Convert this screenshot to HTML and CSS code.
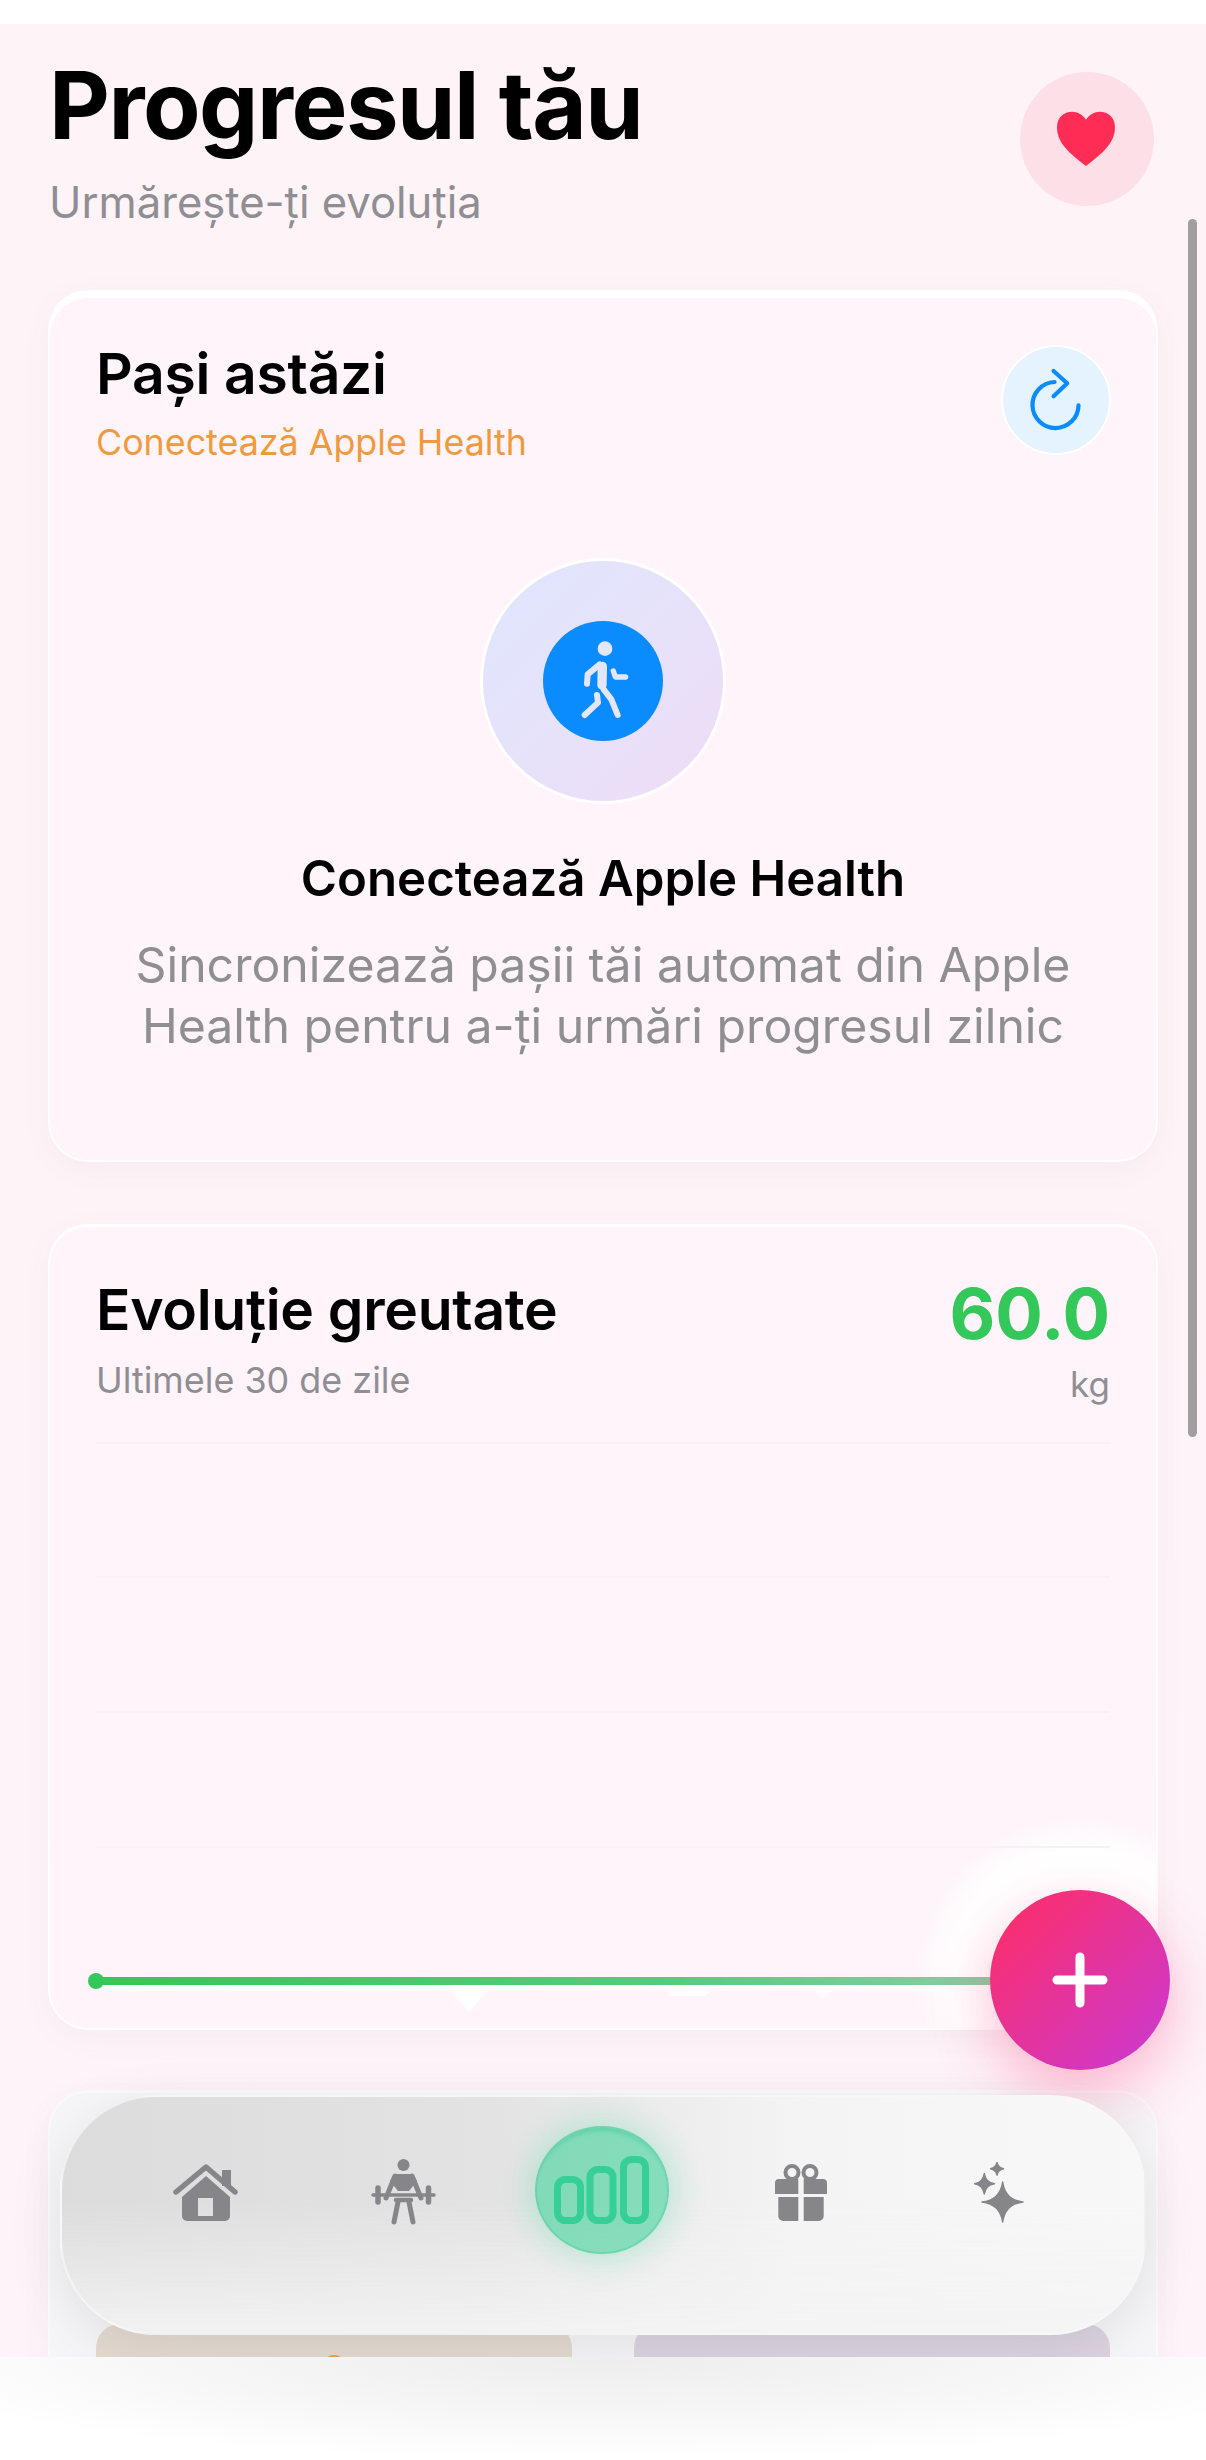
FILE: index.html
```html
<!DOCTYPE html>
<html lang="ro">
<head>
<meta charset="utf-8">
<title>Progresul tău</title>
<link rel="stylesheet" href="styles.css">
</head>
<body>
<main class="screen">
  <header class="page-head">
    <div>
      <h1 class="page-title">Progresul tău</h1>
      <p class="page-sub">Urmărește-ți evoluția</p>
    </div>
    <button class="heart-btn" aria-label="Favorite">
      <svg class="icon-fill" viewBox="0 0 400 402"><path fill="#ff2d55" d="M197 282C150 245 110 215 110 165C110 135 132 119 155 119C172 119 188 128 197 143C206 128 222 119 239 119C262 119 284 135 284 165C284 215 244 245 197 282Z"/></svg>
    </button>
  </header>

  <section class="card card-steps">
    <div class="card-head">
      <div>
        <h2 class="card-title">Pași astăzi</h2>
        <p class="steps-hint">Conectează Apple Health</p>
      </div>
      <button class="refresh-btn" aria-label="Reîmprospătează">
        <svg class="icon-fill" viewBox="0 0 325 327" fill="none" stroke="#0a8cff" stroke-width="13" stroke-linecap="round" stroke-linejoin="round"><path d="M232 180A71 71 0 1 1 158 108"/><path d="M155 74L197 112L155 152"/></svg>
      </button>
    </div>
    <div class="walk-ring">
      <div class="walk-dot">
        <svg class="icon-fill" viewBox="0 0 360 360" fill="none" stroke="#e6e6fb" stroke-linecap="round" stroke-linejoin="round">
          <circle cx="186" cy="83" r="22" fill="#e6e6fb" stroke="none"/>
          <path d="M178 136L177 192" stroke-width="28"/>
          <path d="M170 130L134 160L132 188" stroke-width="18"/>
          <path d="M211 150L217 168L248 168" stroke-width="16"/>
          <path d="M182 205L205 235L224 282" stroke-width="18"/>
          <path d="M162 222L165 245L125 282" stroke-width="18"/>
        </svg>
      </div>
    </div>
    <h3 class="connect-title">Conectează Apple Health</h3>
    <p class="connect-text">Sincronizează pașii tăi automat din Apple Health pentru a-ți urmări progresul zilnic</p>
  </section>

  <section class="card card-weight">
    <div class="weight-head">
      <div>
        <h2 class="card-title">Evoluție greutate</h2>
        <p class="weight-range">Ultimele 30 de zile</p>
      </div>
      <div class="weight-value">
        <strong class="weight-num">60.0</strong>
        <span class="weight-unit">kg</span>
      </div>
    </div>
    <svg class="chart" viewBox="0 0 1014 575">
      <defs>
        <linearGradient id="lineGrad" gradientUnits="userSpaceOnUse" x1="0" y1="0" x2="900" y2="0">
          <stop offset="0" stop-color="#34c759"/>
          <stop offset=".65" stop-color="#5cc981"/>
          <stop offset="1" stop-color="#8fcaa2"/>
        </linearGradient>
      </defs>
      <g stroke="#f6f1f4" stroke-width="2">
        <line x1="0" y1="1" x2="1014" y2="1"/>
        <line x1="0" y1="135" x2="1014" y2="135"/>
        <line x1="0" y1="270" x2="1014" y2="270"/>
        <line x1="0" y1="405" x2="1014" y2="405"/>
      </g>
      <g fill="#fff">
        <path d="M350 543H396L373 570Z"/>
        <path d="M565 543H619L610 554H575Z"/>
        <path d="M712 543H742L727 556Z"/>
        <path d="M0 543H900V549H0Z" opacity=".7"/>
      </g>
      <line x1="0" y1="539" x2="900" y2="539" stroke="url(#lineGrad)" stroke-width="8"/>
      <circle cx="0" cy="539" r="8" fill="#34c759"/>
    </svg>
  </section>

  <section class="card card-tiles">
    <div class="tile tile-orange"><span class="tile-dot"></span></div>
    <div class="tile tile-purple"></div>
  </section>

  <span class="scroll-thumb"></span>

  <button class="fab" aria-label="Adaugă">
    <svg class="fab-plus" viewBox="0 0 56 56" stroke="#fff" stroke-width="9" stroke-linecap="round"><path d="M28 5V51M5 28H51"/></svg>
  </button>

  <nav class="tabbar">
    <a class="tab">
      <svg class="ico-home" viewBox="0 0 65 57" fill="#86868a" fill-rule="evenodd"><path d="M49 6H58V22H49Z"/><path d="M33 12L57 33V52A5 5 0 0 1 52 57H14A5 5 0 0 1 9 52V33ZM25 34V52H40V34Z"/><path d="M3 28L33 3L62 28" fill="none" stroke="#86868a" stroke-width="5.5" stroke-linecap="round" stroke-linejoin="round"/></svg>
    </a>
    <a class="tab">
      <svg class="ico-lift" viewBox="0 0 65 66" fill="#86868a">
        <circle cx="32.5" cy="6" r="6"/>
        <path d="M23 15H42L46 22L38 32H27L19 22Z"/>
        <g fill="none" stroke="#86868a" stroke-linecap="round">
          <path d="M24 17L15 39M41 17L50 39" stroke-width="5"/>
          <path d="M2 36H63" stroke-width="3.5"/>
          <path d="M7 29V43M57.500 29V43" stroke-width="5.500"/>
          <path d="M27 43L23 63M38 43L42 63" stroke-width="5"/>
          <path d="M25 41H40" stroke-width="4.500"/>
        </g>
      </svg>
    </a>
    <a class="tab tab-active">
      <span class="active-disc">
        <svg class="ico-bars" viewBox="0 0 96 68" fill="none" stroke="#35cf97" stroke-width="7"><rect x="3.500" y="23.500" width="23" height="41" rx="8"/><rect x="36" y="13.500" width="23" height="51" rx="8"/><rect x="69.500" y="3.500" width="22" height="61" rx="8"/></svg>
      </span>
    </a>
    <a class="tab">
      <svg class="ico-gift" viewBox="0 0 52 57" fill="#86868a"><path d="M4 15H23.300V30H0V19A4 4 0 0 1 4 15ZM28.700 15H48A4 4 0 0 1 52 19V30H28.700ZM3.300 33H23.300V57H8.300A5 5 0 0 1 3.300 52ZM28.700 33H48.700V52A5 5 0 0 1 43.700 57H28.700Z"/><g fill="none" stroke="#86868a" stroke-width="4"><circle cx="17" cy="8.500" r="6.500"/><circle cx="35" cy="8.500" r="6.500"/></g></svg>
    </a>
    <a class="tab">
      <svg class="ico-spark" viewBox="0 0 50 61" fill="#86868a" stroke="#86868a" stroke-width="1.500" stroke-linejoin="round"><path d="M28.700 20Q31 38 49 40Q31 42 28.700 60Q26 42 8 40Q26 38 28.700 20Z"/><path d="M10.300 11.500Q11.500 20.500 20.500 21.700Q11.500 23 10.300 32Q9 23 0.500 21.700Q9 20.500 10.300 11.500Z"/><path d="M23 0.500Q24 5.700 29.500 6.700Q24 7.700 23 13Q22 7.700 16.500 6.700Q22 5.700 23 0.500Z"/></svg>
    </a>
  </nav>
</main>
<footer class="foot"></footer>
</body>
</html>
```
FILE: styles.css
```css
* { box-sizing: border-box; }

html, body {
  margin: 0;
  padding: 0;
  background: #fff;
}

body {
  width: 1206px;
  height: 2460px;
  overflow: hidden;
  padding-top: 24px;
  font-family: Inter, "Noto Sans", sans-serif;
  color: #000;
}

h1, h2, h3, p { margin: 0; }

button {
  border: 0;
  padding: 0;
  font: inherit;
}

.screen {
  position: relative;
  height: 2333px;
  overflow: hidden;
  padding: 0 48px;
  background: linear-gradient(180deg, #fef3f6 0%, #fef4f8 50%, #fdf3f9 100%);
}

.page-head {
  display: flex;
  justify-content: space-between;
  align-items: flex-start;
  height: 266px;
  padding: 33px 4px 0 1px;
}

.page-title {
  font-size: 94px;
  line-height: 96px;
  font-weight: 700;
  letter-spacing: -1.5px;
}

.page-sub {
  margin-top: 24px;
  font-size: 43.6px;
  line-height: 52px;
  color: #8e8e93;
}

.heart-btn {
  flex: none;
  width: 134px;
  height: 134px;
  margin-top: 15px;
  border-radius: 50%;
  background: #fddfe7;
}

.icon-fill {
  display: block;
  width: 100%;
  height: 100%;
}

.card {
  border: 2px solid rgba(255, 255, 255, .7);
  border-top: 3px solid #fff;
  border-radius: 40px;
  background-color: #fef4f9;
  box-shadow: 0 8px 30px rgba(100, 90, 100, .05);
}

.card-steps {
  height: 872px;
  padding: 48px 46px 0;
  box-shadow: inset 0 5px 0 #fff, 0 8px 30px rgba(100, 90, 100, .05);
}

.card-head {
  display: flex;
  justify-content: space-between;
  align-items: flex-start;
}

.card-title {
  font-size: 57px;
  line-height: 66px;
  font-weight: 600;
  letter-spacing: -.3px;
}

.steps-hint {
  margin-top: 13px;
  font-size: 35.8px;
  line-height: 44px;
  color: #f09a3e;
}

.refresh-btn {
  flex: none;
  width: 110px;
  height: 110px;
  margin: 4px -1px 0 0;
  border-radius: 50%;
  background: #e5f2ff;
  border: 2px solid #fff;
}

.walk-ring {
  display: flex;
  align-items: center;
  justify-content: center;
  width: 240px;
  height: 240px;
  margin: 97px auto 0;
  border-radius: 50%;
  background: linear-gradient(135deg, #dfe6fd 0%, #e6e2fa 50%, #f0dcf6 100%);
  box-shadow: 0 0 0 3px #fff;
}

.walk-dot {
  width: 120px;
  height: 120px;
  border-radius: 50%;
  background: #0a8cff;
}

.connect-title {
  margin-top: 47px;
  font-size: 49.2px;
  line-height: 60px;
  font-weight: 600;
  text-align: center;
}

.connect-text {
  width: 980px;
  margin: 26px auto 0;
  font-size: 48.2px;
  line-height: 61px;
  color: #8e8e93;
  text-align: center;
}

.card-weight {
  height: 806px;
  margin-top: 62px;
  padding: 50px 46px 0;
  background-image: radial-gradient(circle 165px at 1030px 752px, #fff 78%, rgba(255, 255, 255, 0) 100%);
}

.weight-head {
  display: flex;
  justify-content: space-between;
  align-items: flex-start;
  height: 165px;
}

.weight-range {
  margin-top: 15px;
  font-size: 35.9px;
  line-height: 44px;
  color: #8e8e93;
}

.weight-value {
  display: flex;
  flex-direction: column;
  align-items: flex-end;
  margin-top: -1px;
}

.weight-num {
  font-size: 70.6px;
  line-height: 76px;
  font-weight: 700;
  color: #34c759;
}

.weight-unit {
  margin-top: 10px;
  font-size: 35px;
  line-height: 44px;
  color: #8e8e93;
}

.chart {
  display: block;
  width: 1014px;
  height: 575px;
  overflow: visible;
}

.card-tiles {
  display: flex;
  gap: 62px;
  height: 300px;
  margin-top: 60px;
  padding: 231px 46px 0;
  background-color: #f6f5f7;
  border-color: rgba(255, 255, 255, .5);
}

.tile {
  flex: 1;
  display: flex;
  justify-content: center;
  border-radius: 24px 24px 0 0;
}

.tile-orange { background: #e3d9cf; }
.tile-purple { background: #dcd2df; }

.tile-dot {
  width: 24px;
  height: 24px;
  margin-top: 31px;
  border-radius: 50%;
  background: #f09a3e;
}

.scroll-thumb {
  position: absolute;
  top: 195px;
  left: 1188px;
  width: 9px;
  height: 1218px;
  border-radius: 5px;
  background: #a29ea0;
}

.fab {
  position: absolute;
  top: 1866px;
  left: 990px;
  display: flex;
  align-items: center;
  justify-content: center;
  width: 180px;
  height: 180px;
  border-radius: 50%;
  background: linear-gradient(135deg, #ff2d62 0%, #c93ad6 100%);
  box-shadow: 0 22px 60px rgba(255, 45, 110, .32);
}

.fab-plus {
  width: 56px;
  height: 56px;
}

.tabbar {
  position: absolute;
  top: 2071px;
  left: 60px;
  display: flex;
  justify-content: space-between;
  align-items: flex-start;
  width: 1086px;
  height: 240px;
  padding: 62px 105px 0 103px;
  border-radius: 96px;
  border: 2px solid rgba(248, 248, 248, .7);
  background:
    linear-gradient(180deg, rgba(244, 244, 244, 0) 45%, rgba(244, 244, 244, .9) 100%),
    linear-gradient(90deg, #dcdcdc 0%, #e3e3e3 40%, #f4f4f4 68%, #f8f8f8 100%);
  box-shadow: 0 14px 50px rgba(120, 120, 130, .16);
}

.tab {
  display: flex;
  align-items: center;
  justify-content: center;
  width: 80px;
  height: 66px;
}

.ico-home { width: 65px; height: 57px; }
.ico-lift { width: 65px; height: 66px; }
.ico-gift { width: 52px; height: 57px; }
.ico-spark { width: 50px; height: 61px; }

.active-disc {
  display: flex;
  align-items: center;
  justify-content: center;
  flex: none;
  width: 134px;
  height: 128px;
  margin-top: -4px;
  border-radius: 50%;
  background: rgba(52, 208, 150, .56);
  border: 2px solid rgba(52, 200, 150, .3);
  box-shadow: inset 0 8px 5px -5px rgba(52, 200, 150, .45), 0 0 30px 8px rgba(52, 208, 150, .24);
}

.ico-bars { width: 96px; height: 68px; }

.foot {
  height: 103px;
  background: radial-gradient(ellipse 62% 100% at 50% 0, #ededed 0%, #f6f6f6 55%, #fff 100%);
}
```
